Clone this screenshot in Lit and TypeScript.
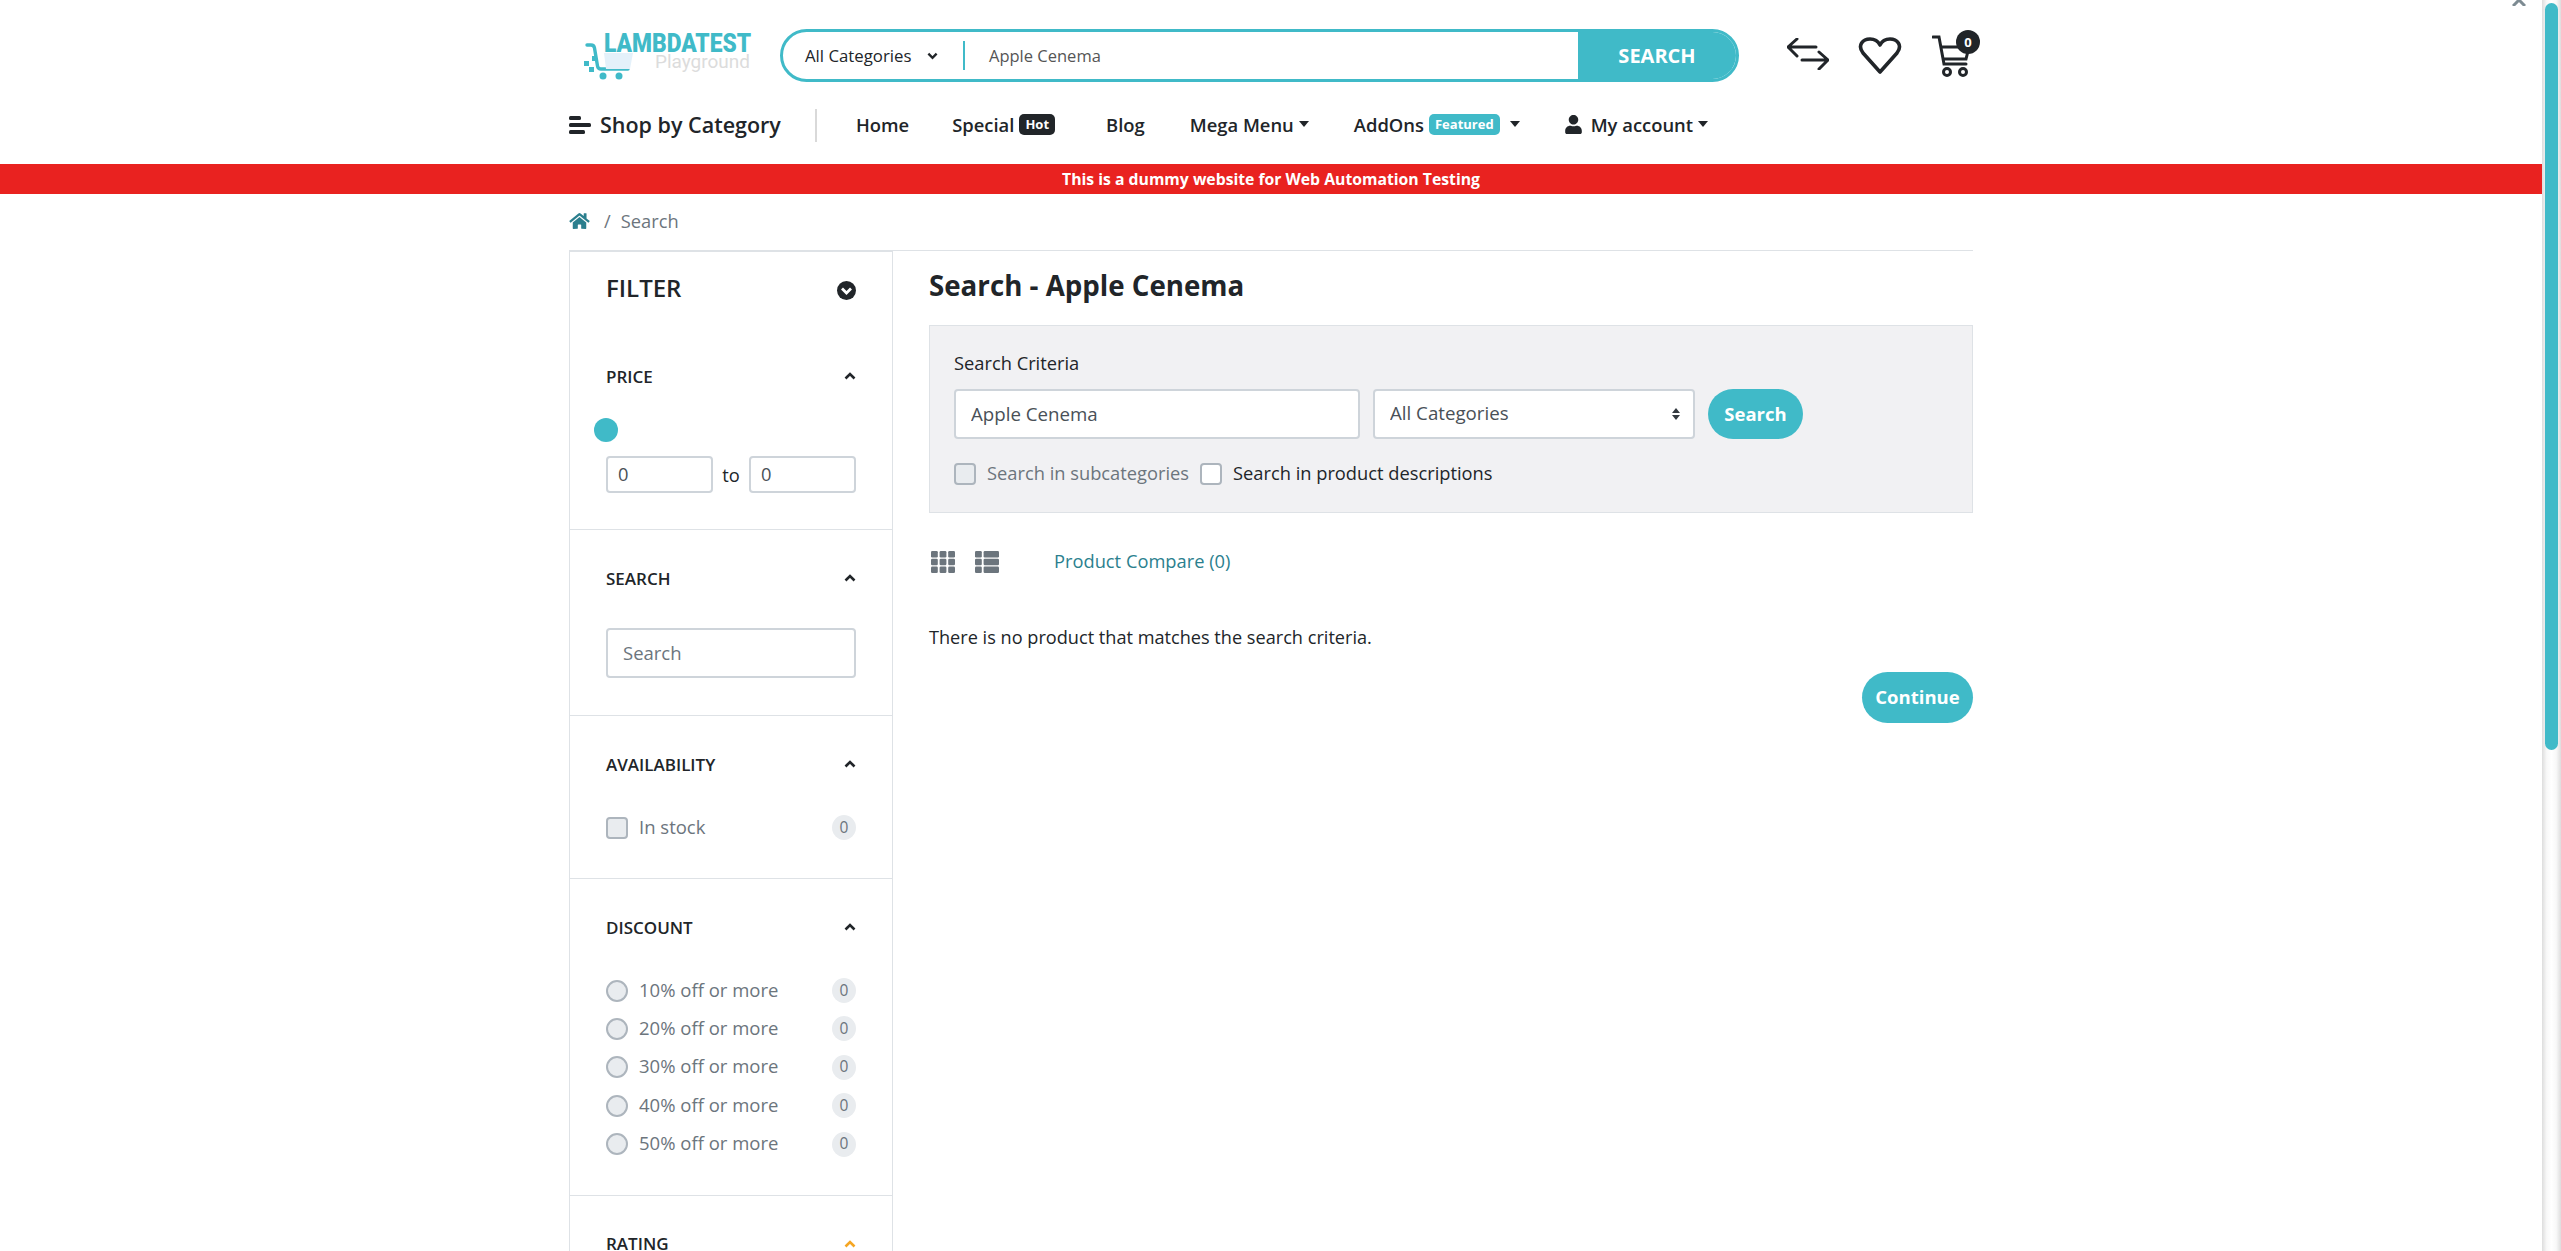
import {LitElement, css, html, svg} from 'lit';
import {customElement} from 'lit/decorators.js';

const chevron = (color = '#212529') => html`<svg class="chev" viewBox="0 0 12 8"><polyline points="1.5,6.5 6,2 10.5,6.5" fill="none" stroke=${color} stroke-width="2.6"/></svg>`;
const caret = html`<svg class="caret" viewBox="0 0 10 6"><path d="M0 0h10L5 6z" fill="#212529"/></svg>`;
const HOME = 'M280.37 148.26L96 300.11V464a16 16 0 0 0 16 16l112.06-.29a16 16 0 0 0 15.92-16V368a16 16 0 0 1 16-16h64a16 16 0 0 1 16 16v95.64a16 16 0 0 0 16 16.05L464 480a16 16 0 0 0 16-16V300L295.67 148.26a12.19 12.19 0 0 0-15.3 0zM571.6 251.47L488 182.56V44.05a12 12 0 0 0-12-12h-56a12 12 0 0 0-12 12v72.61L318.47 43a48 48 0 0 0-61 0L4.34 251.47a12 12 0 0 0-1.6 16.9l25.5 31A12 12 0 0 0 45.15 301l235.22-193.74a12.19 12.19 0 0 1 15.3 0L530.9 301a12 12 0 0 0 16.9-1.6l25.5-31a12 12 0 0 0-1.7-16.93z';
const USER = 'M224 256c70.7 0 128-57.3 128-128S294.7 0 224 0 96 57.3 96 128s57.3 128 128 128zm89.6 32h-16.7c-22.2 10.2-46.9 16-72.9 16s-50.6-5.8-72.9-16h-16.7C60.2 288 0 348.2 0 422.4V464c0 26.5 21.5 48 48 48h352c26.5 0 48-21.5 48-48v-41.6c0-74.2-60.2-134.4-134.4-134.4z';

const discounts = ['10% off or more', '20% off or more', '30% off or more', '40% off or more', '50% off or more'];

const cells = (cols: number[][], rows = 3) => {
	const out = [];
	for (let r = 0; r < rows; r++) {
		for (const [x, w] of cols) {
			out.push(svg`<rect x=${x} y=${r * 7.8} width=${w} height="6.4" rx="1.2" fill="#6c757d"/>`);
		}
	}
	return out;
};

@customElement('app-root')
export class AppRoot extends LitElement {
	static styles = css`
		:host {
			display: block;
			font-family: 'Open Sans', 'Noto Sans', sans-serif;
			color: #212529;
			font-size: 18.3px;
		}

		* {
			box-sizing: border-box;
		}

		.window {
			display: flex;
			height: 100vh;
			overflow: hidden;
			position: relative;
			background: #fff;
		}

		.page {
			flex: 1;
			min-width: 0;
		}

		.scrollbar {
			width: 19px;
			flex: none;
			padding: 3px 3px 0;
			background: linear-gradient(90deg, #ddd, #f8f8f8 25%, #fff 50%, #f8f8f8 75%, #ddd);
		}

		.scrollbar div {
			height: 747px;
			border-radius: 7px;
			background: #40bac8;
		}

		.closer {
			position: absolute;
			left: 2512px;
			top: 0;
			width: 14px;
			height: 6px;
		}

		.wrap {
			width: 1404px;
			margin: 0 auto;
		}

		header {
			height: 164px;
			padding-top: 29px;
		}

		.top {
			display: flex;
			align-items: flex-start;
			height: 53px;
		}

		.logo {
			width: 211px;
			height: 53px;
			flex: none;
			padding-left: 15px;
		}

		.logo svg {
			display: block;
			width: 170px;
			height: 53px;
			overflow: visible;
		}

		.searchbar {
			width: 959px;
			height: 53px;
			flex: none;
			display: flex;
			align-items: center;
			border: 3px solid #40bac8;
			border-radius: 27px;
			overflow: hidden;
		}

		.cat {
			display: flex;
			align-items: center;
			width: 182px;
			height: 29px;
			padding-left: 22px;
			border-right: 2px solid #40bac8;
			font-size: 16.8px;
			flex: none;
			white-space: nowrap;
		}

		.cat svg {
			width: 11px;
			height: 8px;
			margin-left: 16px;
		}

		.query {
			flex: 1;
			padding-left: 24px;
			font-size: 16.5px;
			color: #555;
		}

		.go {
			width: 158px;
			height: 100%;
			flex: none;
			display: flex;
			align-items: center;
			justify-content: center;
			background: #40bac8;
			color: #fff;
			font-weight: 700;
			font-size: 20px;
		}

		.tools {
			display: flex;
			align-items: flex-start;
			position: relative;
			margin-left: 48px;
		}

		.tools svg {
			display: block;
			flex: none;
		}

		.compare {
			width: 42px;
			height: 32px;
			margin-top: 9px;
		}

		.heart {
			width: 44px;
			height: 38px;
			margin: 8px 0 0 29px;
		}

		.cart {
			width: 38px;
			height: 42px;
			margin: 6px 0 0 30px;
		}

		.cartcount {
			position: absolute;
			left: 169px;
			top: 1px;
			width: 24px;
			height: 24px;
			border-radius: 50%;
			background: #212529;
			color: #fff;
			font-size: 13px;
			font-weight: 700;
			display: flex;
			align-items: center;
			justify-content: center;
		}

		nav {
			display: flex;
			align-items: center;
			height: 52px;
			margin-top: 17px;
			font-size: 18.4px;
			font-weight: 600;
			white-space: nowrap;
		}

		.shop {
			display: flex;
			align-items: center;
			width: 248px;
			height: 33px;
			padding-bottom: 1px;
			border-right: 2px solid #d9d9d9;
			flex: none;
			font-size: 21.5px;
		}

		.shop svg {
			width: 22px;
			height: 20px;
			margin-right: 9px;
		}

		.item {
			display: flex;
			align-items: center;
			padding-bottom: 2px;
		}

		.badge {
			font-size: 13px;
			font-weight: 700;
			color: #fff;
			height: 21px;
			padding: 0 6px;
			border-radius: 5px;
			margin-left: 5px;
			display: flex;
			align-items: center;
		}

		.hot {
			background: #212529;
		}

		.featured {
			background: #40bac8;
		}

		.caret {
			width: 10px;
			height: 6px;
			margin-left: 5px;
			display: block;
		}

		.user {
			width: 17px;
			height: 19px;
			margin-right: 9px;
		}

		.notice {
			height: 30px;
			background: #e92220;
			color: #fff;
			font-size: 15.75px;
			font-weight: 700;
			display: flex;
			align-items: center;
			justify-content: center;
		}

		.crumb {
			display: flex;
			align-items: center;
			height: 57px;
			border-bottom: 1px solid #dee2e6;
			color: #6c757d;
			padding-bottom: 3px;
		}

		.crumb svg {
			width: 21px;
			height: 18px;
			margin-right: 14px;
		}

		.crumb i {
			font-style: normal;
			margin-right: 10px;
		}

		.cols {
			display: flex;
			align-items: stretch;
			min-height: 1836px;
		}

		aside {
			width: 324px;
			flex: none;
			border: 1px solid #dee2e6;
			border-width: 1px 1px 0;
		}

		.filter-head {
			display: flex;
			justify-content: space-between;
			height: 76px;
			padding: 18px 36px 0;
			font-size: 24px;
			font-weight: 600;
			line-height: 36px;
		}

		.filter-head svg {
			width: 19px;
			height: 19px;
			margin-top: 11px;
		}

		section {
			padding: 36px 36px 37px;
			border-bottom: 1px solid #dee2e6;
		}

		section h4 {
			display: flex;
			align-items: center;
			justify-content: space-between;
			height: 24px;
			margin: 0;
			font-size: 17px;
			font-weight: 600;
		}

		.chev {
			width: 12px;
			height: 8px;
			display: block;
		}

		.thumb {
			width: 24px;
			height: 24px;
			margin: 30px 0 14px -12px;
			border-radius: 50%;
			background: #40bac8;
		}

		.range {
			display: flex;
			align-items: center;
			justify-content: space-between;
			margin-bottom: -1px;
		}

		input {
			display: block;
			font: inherit;
			color: #495057;
			background: #fff;
			border: 2px solid #ced4da;
			border-radius: 4px;
			outline: none;
			padding-bottom: 2px;
		}

		input::placeholder {
			color: #6c757d;
			opacity: 1;
		}

		.range input {
			width: 107px;
			height: 37px;
			padding: 0 10px 2px;
		}

		.find {
			width: 250px;
			height: 50px;
			padding: 0 15px 2px;
			margin: 38px 0 0;
			font-size: 18.5px;
		}

		.rows {
			margin: 39px 0 1px;
			display: flex;
			flex-direction: column;
			gap: 13.4px;
		}

		.row {
			display: flex;
			align-items: center;
			height: 25px;
			color: #6c757d;
			font-size: 18.5px;
		}

		.lbl {
			padding-bottom: 3px;
		}

		.box {
			width: 22px;
			height: 22px;
			margin-right: 11px;
			flex: none;
			background: #e9ecef;
			border: 2px solid #adb5bd;
			border-radius: 4px;
		}

		.box.round {
			border-radius: 50%;
		}

		.box.white {
			background: #fff;
		}

		.count {
			margin-left: auto;
			width: 24px;
			height: 25px;
			padding-bottom: 2px;
			border-radius: 50%;
			background: #e9ecef;
			font-size: 15.5px;
			display: flex;
			align-items: center;
			justify-content: center;
		}

		main {
			flex: 1;
			margin-left: 36px;
		}

		h1 {
			height: 74px;
			margin: 0;
			padding-top: 12px;
			font-size: 27.7px;
			font-weight: 700;
			line-height: 44px;
		}

		.panel {
			height: 188px;
			padding: 25px 24px 0;
			background: #f1f1f3;
			border: 1px solid #dee2e6;
		}

		.panel label {
			display: block;
			height: 24px;
			line-height: 24px;
		}

		.fields {
			display: flex;
			margin-top: 14px;
			gap: 13px;
			font-size: 18.7px;
		}

		.fields input {
			width: 406px;
			height: 50px;
			padding: 0 15px 2px;
		}

		.selectwrap {
			position: relative;
			width: 322px;
			height: 50px;
		}

		select {
			appearance: none;
			width: 100%;
			height: 100%;
			padding: 0 15px 3px;
			font: inherit;
			color: #495057;
			background: #fff;
			border: 2px solid #ced4da;
			border-radius: 4px;
		}

		.updown {
			position: absolute;
			right: 14px;
			top: 18px;
			width: 10px;
			height: 14px;
		}

		button {
			font: inherit;
			font-weight: 700;
			font-size: 18.5px;
			color: #fff;
			background: #40bac8;
			border: 0;
			border-radius: 26px;
			padding: 0 0 2px;
		}

		.submit {
			width: 95px;
			height: 50px;
		}

		.checks {
			display: flex;
			align-items: center;
			height: 22px;
			margin-top: 24px;
		}

		.checks span:not(.box) {
			padding-bottom: 3px;
		}

		.checks span.off {
			color: #6c757d;
			width: 213px;
			white-space: nowrap;
		}

		.views {
			display: flex;
			align-items: center;
			height: 24px;
			margin-top: 37px;
			padding-left: 2px;
			color: #2b7f8e;
		}

		.views svg {
			width: 24px;
			height: 22px;
			margin-right: 20px;
		}

		.views a {
			margin-left: 35px;
			padding-bottom: 3px;
		}

		.empty {
			margin: 50px 0 22px;
			line-height: 26px;
			font-size: 18.15px;
		}

		.end {
			display: flex;
			justify-content: flex-end;
		}

		.continue {
			width: 111px;
			height: 51px;
		}
	`;

	private discountRow(label: string) {
		return html`<div class="row"><span class="box round"></span><span class="lbl">${label}</span><span class="count">0</span></div>`;
	}

	render() {
		return html`
			<div class="window">
				<div class="page">
					<header class="wrap">
						<div class="top">
							<div class="logo">
								<svg viewBox="0 0 170 53">
									<path d="M3 16h4q3 0 3.500 3l3 18q.5 3 3.500 3h27" fill="none" stroke="#40bac8" stroke-width="3.400" stroke-linecap="round"/>
									<path d="M20 24h29l-3 16H22z" fill="#e4f1fa"/>
									<circle cx="19" cy="47" r="3.500" fill="#40bac8"/>
									<circle cx="35" cy="47" r="3.500" fill="#40bac8"/>
									<rect x="0" y="32" width="5" height="5" fill="#40bac8"/>
									<rect x="5" y="38" width="5" height="5" fill="#40bac8"/>
									<rect x="8" y="27" width="5" height="5" fill="#40bac8"/>
									<text x="20" y="23" textLength="147" lengthAdjust="spacingAndGlyphs" font-family="Roboto" font-weight="900" font-size="25" fill="#40bac8">LAMBDATEST</text>
									<text x="71" y="39" textLength="95" lengthAdjust="spacingAndGlyphs" font-family="Roboto" font-size="19" fill="#dcdcdc">Playground</text>
								</svg>
							</div>
							<div class="searchbar">
								<div class="cat">All Categories<svg viewBox="0 0 12 8"><polyline points="1.500,1.500 6,6 10.500,1.500" fill="none" stroke="#212529" stroke-width="2.600"/></svg></div>
								<div class="query">Apple Cenema</div>
								<div class="go">SEARCH</div>
							</div>
							<div class="tools">
								<svg class="compare" viewBox="0 0 42 32" fill="none" stroke="#212529" stroke-width="3" stroke-linecap="round">
									<path d="M29 9H1M10 1L1 9l9 9M15 22h26M32 14l9 8-9 9"/>
								</svg>
								<svg class="heart" viewBox="0 0 44 38" fill="none" stroke="#212529" stroke-width="3.600" stroke-linejoin="round">
									<path d="M22 35L5 16C-1 8 5 2 12 2c4 0 8 2 10 6 2-4 6-6 10-6 7 0 13 6 7 14z"/>
								</svg>
								<svg class="cart" viewBox="0 0 38 42" fill="none" stroke="#212529" stroke-width="3" stroke-linecap="round">
									<path d="M1 2h6l5 27h22M9 12h28l-3 12H11"/>
									<circle cx="15" cy="37" r="3.500"/>
									<circle cx="31" cy="37" r="3.500"/>
								</svg>
								<span class="cartcount">0</span>
							</div>
						</div>
						<nav>
							<div class="shop">
								<svg viewBox="0 0 22 20" fill="#212529"><rect y="1" width="12" height="4" rx="1.500"/><rect y="8" width="22" height="4" rx="1.500"/><rect y="15" width="16" height="4" rx="1.500"/></svg>
								Shop by Category
							</div>
							<div class="item" style="margin-left:39px">Home</div>
							<div class="item" style="margin-left:43px">Special<span class="badge hot">Hot</span></div>
							<div class="item" style="margin-left:51px">Blog</div>
							<div class="item" style="margin-left:45px">Mega Menu${caret}</div>
							<div class="item" style="margin-left:45px">AddOns<span class="badge featured">Featured</span><span style="margin-left:5px">${caret}</span></div>
							<div class="item" style="margin-left:45px"><svg class="user" viewBox="0 0 448 512"><path d=${USER} fill="#212529"/></svg>My account${caret}</div>
						</nav>
					</header>
					<div class="notice">This is a dummy website for Web Automation Testing</div>
					<div class="wrap">
						<div class="crumb">
							<svg viewBox="0 0 576 512"><path d=${HOME} fill="#2b7f8e"/></svg>
							<i>/</i>Search
						</div>
						<div class="cols">
							<aside>
								<div class="filter-head">
									FILTER
									<svg viewBox="0 0 19 19"><circle cx="9.500" cy="9.500" r="9.500" fill="#212529"/><polyline points="5,7.500 9.500,12 14,7.500" fill="none" stroke="#fff" stroke-width="2.800"/></svg>
								</div>
								<section>
									<h4>PRICE${chevron()}</h4>
									<div class="thumb"></div>
									<div class="range"><input value="0" />to<input value="0" /></div>
								</section>
								<section>
									<h4>SEARCH${chevron()}</h4>
									<input class="find" placeholder="Search" />
								</section>
								<section>
									<h4>AVAILABILITY${chevron()}</h4>
									<div class="rows"><div class="row"><span class="box"></span><span class="lbl">In stock</span><span class="count">0</span></div></div>
								</section>
								<section>
									<h4>DISCOUNT${chevron()}</h4>
									<div class="rows">${discounts.map(d => this.discountRow(d))}</div>
								</section>
								<section style="border:0">
									<h4>RATING${chevron('#f5a623')}</h4>
								</section>
							</aside>
							<main>
								<h1>Search - Apple Cenema</h1>
								<div class="panel">
									<label>Search Criteria</label>
									<div class="fields">
										<input value="Apple Cenema" />
										<div class="selectwrap">
											<select><option>All Categories</option></select>
											<svg class="updown" viewBox="0 0 10 14"><path d="M5 1l4 5H1zM5 13L1 8h8z" fill="#343a40"/></svg>
										</div>
										<button class="submit">Search</button>
									</div>
									<div class="checks">
										<span class="box"></span><span class="off">Search in subcategories</span>
										<span class="box white"></span><span>Search in product descriptions</span>
									</div>
								</div>
								<div class="views">
									<svg viewBox="0 0 24 22">${cells([[0, 6.800], [8.600, 6.800], [17.200, 6.800]])}</svg>
									<svg viewBox="0 0 24 22">${cells([[0, 6.800], [8.600, 15.400]])}</svg>
									<a>Product Compare (0)</a>
								</div>
								<p class="empty">There is no product that matches the search criteria.</p>
								<div class="end"><button class="continue">Continue</button></div>
							</main>
						</div>
					</div>
				</div>
				<div class="scrollbar"><div></div></div>
				<svg class="closer" viewBox="0 0 14 6"><path d="M7 0L1 6M7 0l6 6" stroke="#7d8b92" stroke-width="3" fill="none"/></svg>
			</div>
		`;
	}
}
